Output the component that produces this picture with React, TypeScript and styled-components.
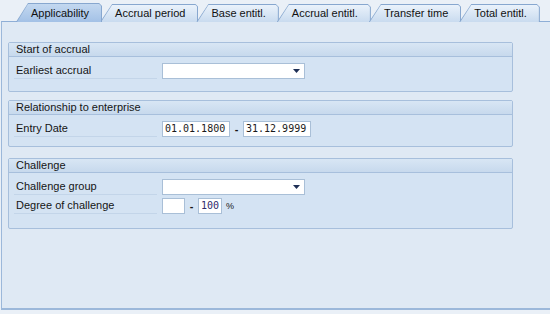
import styled, { createGlobalStyle } from "styled-components";

const GlobalStyle = createGlobalStyle`
  body {
    margin: 0;
    background: #eaf0f7;
    font-family: "Liberation Sans", Arial, sans-serif;
    font-size: 11px;
    color: #151515;
  }
`

type tabProps = {
    label: string,
    active?: boolean
}

function Tab(props: tabProps) {
    return <TabOuter $active={props.active}>
        <TabInner $active={props.active}>{props.label}</TabInner>
    </TabOuter>
}

type fieldRowProps = {
    label: string,
    children: React.ReactNode
}

function FieldRow(props: fieldRowProps) {
    return <Row>
        <Label>{props.label}</Label>
        <Fields>{props.children}</Fields>
    </Row>
}

function Dropdown() {
    return <Select>
        <svg width="7" height="4" viewBox="0 0 7 4">
            <path d="M0 0 H7 L3.5 4 Z" fill="#1e2f55"/>
        </svg>
    </Select>
}

export default function App() {
    const tabs = ["Applicability", "Accrual period", "Base entitl.", "Accrual entitl.", "Transfer time", "Total entitl."];

    return <>
        <GlobalStyle/>
        <TabStrip>
            {tabs.map((t, i) => <Tab key={t} label={t} active={i === 0}/>)}
        </TabStrip>
        <Panel>
            <GroupBox $pb={12}>
                <GroupHeader>Start of accrual</GroupHeader>
                <GroupBody>
                    <FieldRow label="Earliest accrual"><Dropdown/></FieldRow>
                </GroupBody>
            </GroupBox>
            <GroupBox $pb={9} $mt={8}>
                <GroupHeader>Relationship to enterprise</GroupHeader>
                <GroupBody>
                    <FieldRow label="Entry Date">
                        <Input $w={68}>01.01.1800</Input>
                        <Dash>-</Dash>
                        <Input $w={68}>31.12.9999</Input>
                    </FieldRow>
                </GroupBody>
            </GroupBox>
            <GroupBox $pb={14} $mt={11}>
                <GroupHeader>Challenge</GroupHeader>
                <GroupBody>
                    <FieldRow label="Challenge group"><Dropdown/></FieldRow>
                    <FieldRow label="Degree of challenge">
                        <Input $w={23}/>
                        <Dash>-</Dash>
                        <Input $w={24} $value>100</Input>
                        <Unit>%</Unit>
                    </FieldRow>
                </GroupBody>
            </GroupBox>
        </Panel>
    </>
}

const TabStrip = styled.div`
  display: flex;
  align-items: flex-end;
  height: 22px;
  padding-left: 16px;
  margin-bottom: -1px;
`

const TabOuter = styled.div<{ $active?: boolean }>`
  position: relative;
  z-index: ${p => p.$active ? 2 : 1};
  height: ${p => p.$active ? 19 : 18}px;
  margin-right: -2px;
  padding: 1px 1px 0 1px;
  background: #87a7cf;
  clip-path: polygon(12px 0, calc(100% - 3px) 0, 100% 3px, 100% 100%, 0 100%);
  box-sizing: border-box;
`

const TabInner = styled.div<{ $active?: boolean }>`
  height: 100%;
  box-sizing: border-box;
  padding: ${p => p.$active ? 3 : 2}px 12px 0 14px;
  white-space: nowrap;
  color: #111;
  background: ${p => p.$active
    ? "linear-gradient(#c3d8f0, #a3c1e6)"
    : "linear-gradient(#eaf2fb, #c9dbef)"};
  clip-path: polygon(11px 0, calc(100% - 2px) 0, 100% 2px, 100% 100%, 0 100%);
`

const Panel = styled.div`
  height: 289px;
  box-sizing: border-box;
  margin-left: 1px;
  padding: 20px 0 0 6px;
  background: #dfe9f4;
  border-top: 1px solid #8eaed6;
  border-left: 1px solid #9cb8da;
  border-bottom: 2px solid #9cb8da;
`

const GroupBox = styled.div<{ $pb: number, $mt?: number }>`
  width: 505px;
  box-sizing: border-box;
  margin-top: ${p => p.$mt ?? 0}px;
  padding-bottom: ${p => p.$pb}px;
  background: #d4e3f3;
  border: 1px solid #a7bfdc;
  border-radius: 2px;
`

const GroupHeader = styled.div`
  height: 13px;
  line-height: 13px;
  padding-left: 7px;
  background: linear-gradient(#d8e6f4, #c7d9ed);
  border-bottom: 1px solid #a7bfdc;
`

const GroupBody = styled.div`
  display: flex;
  flex-direction: column;
  gap: 3px;
  padding: 6px 0 0 5px;
`

const Row = styled.div`
  display: flex;
  align-items: center;
  height: 16px;
`

const Label = styled.div`
  width: 143px;
  height: 16px;
  line-height: 15px;
  padding-left: 2px;
  border-bottom: 1px solid #c3d5e9;
  box-sizing: border-box;
`

const Fields = styled.div`
  display: flex;
  align-items: center;
  margin-left: 5px;
`

const Select = styled.div`
  display: flex;
  align-items: center;
  justify-content: flex-end;
  width: 143px;
  height: 16px;
  padding-right: 4px;
  box-sizing: border-box;
  background: #fff;
  border: 1px solid #a9bfd7;
`

const Input = styled.div<{ $w: number, $value?: boolean }>`
  width: ${p => p.$w}px;
  height: 16px;
  box-sizing: border-box;
  padding-left: 2px;
  line-height: 14px;
  background: #fff;
  border: 1px solid #a9bfd7;
  font-family: "DejaVu Sans Mono", "Liberation Mono", monospace;
  font-size: 10px;
  color: ${p => p.$value ? "#2e2b6c" : "#1a1a1a"};
`

const Dash = styled.span`
  width: 13px;
  text-align: center;
  font-weight: bold;
`

const Unit = styled.span`
  margin-left: 4px;
  font-size: 9px;
`
